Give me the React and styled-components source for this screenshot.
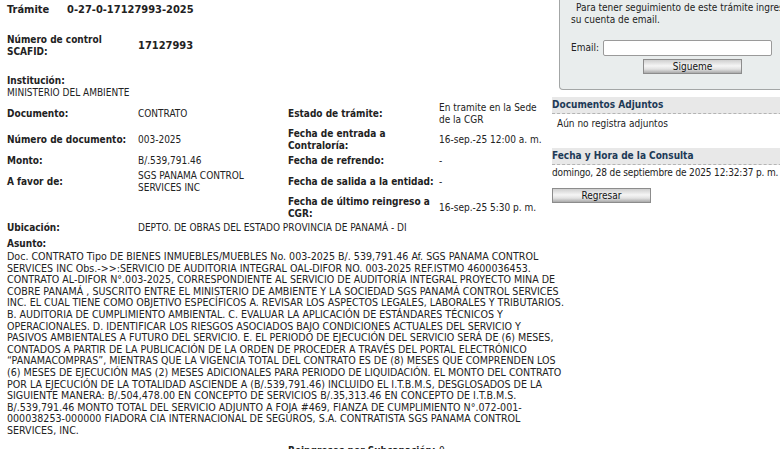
import styled, { createGlobalStyle } from 'styled-components'

const Global = createGlobalStyle`
  html, body {
    margin: 0;
    padding: 0;
    background: #fff;
    overflow: hidden;
  }
  body {
    font-family: "DejaVu Sans Condensed", "DejaVu Sans", sans-serif;
    font-size: 10px;
    line-height: 12px;
    color: #222;
  }
`

/* Estructura general */
const Page = styled.div`
  display: flex;
  width: 1000px;
`

const Main = styled.div`
  width: 538px;
  padding-left: 7px;
  flex-shrink: 0;
`

const Side = styled.div`
  width: 260px;
  margin-left: 7px;
  flex-shrink: 0;
`

/* Cabecera del trámite */
const TramiteRow = styled.div`
  display: flex;
  margin-top: 4px;
  font-weight: bold;
  font-size: 11px;
  & span:first-child {
    width: 60px;
  }
`

const ControlRow = styled.div`
  display: flex;
  align-items: center;
  margin-top: 18px;
`

const Label = styled.div`
  font-weight: bold;
  white-space: nowrap;
  width: ${(p) => p.$w || 'auto'};
`

const BigValue = styled.div`
  font-weight: bold;
  font-size: 11px;
`

const Block = styled.div`
  margin-top: ${(p) => p.$mt || 0}px;
`

/* Tabla de datos */
const Grid = styled.div`
  display: grid;
  grid-template-columns: 131px 150px 151px 1fr;
  grid-template-rows: 26px 26px 16px 26px 26px 14px;
  align-items: center;
  margin-top: 2px;
`

const Cell = styled.div`
  font-weight: ${(p) => (p.$bold ? 'bold' : 'normal')};
  grid-column: ${(p) => p.$span || 'auto'};
  white-space: nowrap;
`

const Paragraph = styled.div`
  margin-top: 1px;
  font-size: 10.6px;
  line-height: 11.6px;
  white-space: nowrap;
`

const FootRow = styled.div`
  display: grid;
  grid-template-columns: 281px 151px 1fr;
  margin-top: 8px;
`

/* Columna lateral */
const EmailBox = styled.div`
  margin-left: 7px;
  background: #e9eded;
  border: 1px solid #a3a6a6;
  border-top: none;
  border-radius: 0 0 4px 4px;
  padding: 2px 0 15px 11px;
  white-space: nowrap;
`

const Indent = styled.div`
  text-indent: 5px;
`

const EmailRow = styled.div`
  display: flex;
  align-items: center;
  margin-top: 14px;
  gap: 4px;
`

const Input = styled.input`
  width: 167px;
  height: 14px;
  padding: 0;
  border: 1px solid #9a9a9a;
  border-radius: 2px;
  background: #fff;
`

const Button = styled.button`
  display: block;
  width: ${(p) => p.$w || 99}px;
  height: 15px;
  padding: 0;
  margin-top: ${(p) => p.$mt || 0}px;
  margin-left: ${(p) => p.$ml || 0}px;
  font-family: inherit;
  font-size: 10px;
  line-height: 13px;
  color: #111;
  border: 1px solid #8c8c8c;
  background: linear-gradient(#cfcfcf, #f5f5f5 45%, #e2e2e2 70%, #a9a9a9);
`

const Header = styled.div`
  margin-top: ${(p) => p.$mt || 0}px;
  height: 16px;
  line-height: 16px;
  background: #e8e8e8;
  border-bottom: 1px dashed #b4b4b4;
  font-weight: bold;
  font-size: 10px;
  color: #1d3a57;
`

const Note = styled.div`
  margin-top: ${(p) => p.$mt || 0}px;
  padding-left: ${(p) => p.$pl || 0}px;
  letter-spacing: ${(p) => p.$ls || 0}px;
  white-space: nowrap;
`

const asunto = [
  'Doc. CONTRATO Tipo DE BIENES INMUEBLES/MUEBLES No. 003-2025 B/. 539,791.46 Af. SGS PANAMA CONTROL',
  'SERVICES INC Obs.->>:SERVICIO DE AUDITORIA INTEGRAL OAL-DIFOR NO. 003-2025 REF.ISTMO 4600036453.',
  'CONTRATO AL-DIFOR N°.003-2025, CORRESPONDIENTE AL SERVICIO DE AUDITORÍA INTEGRAL PROYECTO MINA DE',
  'COBRE PANAMÁ , SUSCRITO ENTRE EL MINISTERIO DE AMBIENTE Y LA SOCIEDAD SGS PANAMÁ CONTROL SERVICES',
  'INC. EL CUAL TIENE COMO OBJETIVO ESPECÍFICOS A. REVISAR LOS ASPECTOS LEGALES, LABORALES Y TRIBUTARIOS.',
  'B. AUDITORIA DE CUMPLIMIENTO AMBIENTAL. C. EVALUAR LA APLICACIÓN DE ESTÁNDARES TÉCNICOS Y',
  'OPERACIONALES. D. IDENTIFICAR LOS RIESGOS ASOCIADOS BAJO CONDICIONES ACTUALES DEL SERVICIO Y',
  'PASIVOS AMBIENTALES A FUTURO DEL SERVICIO. E. EL PERIODO DE EJECUCIÓN DEL SERVICIO SERÁ DE (6) MESES,',
  'CONTADOS A PARTIR DE LA PUBLICACIÓN DE LA ORDEN DE PROCEDER A TRAVÉS DEL PORTAL ELECTRÓNICO',
  '“PANAMACOMPRAS”, MIENTRAS QUE LA VIGENCIA TOTAL DEL CONTRATO ES DE (8) MESES QUE COMPRENDEN LOS',
  '(6) MESES DE EJECUCIÓN MAS (2) MESES ADICIONALES PARA PERIODO DE LIQUIDACIÓN. EL MONTO DEL CONTRATO',
  'POR LA EJECUCIÓN DE LA TOTALIDAD ASCIENDE A (B/.539,791.46) INCLUIDO EL I.T.B.M.S, DESGLOSADOS DE LA',
  'SIGUIENTE MANERA: B/.504,478.00 EN CONCEPTO DE SERVICIOS B/.35,313.46 EN CONCEPTO DE I.T.B.M.S.',
  'B/.539,791.46 MONTO TOTAL DEL SERVICIO ADJUNTO A FOJA #469, FIANZA DE CUMPLIMIENTO N°.072-001-',
  '000038253-000000 FIADORA CIA INTERNACIONAL DE SEGUROS, S.A. CONTRATISTA SGS PANAMA CONTROL',
  'SERVICES, INC.',
]

const App = () => {
  return (
    <>
      <Global />
      <Page>
        <Main>
          <TramiteRow>
            <span>Trámite</span>
            <span>0-27-0-17127993-2025</span>
          </TramiteRow>

          <ControlRow>
            <Label $w="131px">Número de control<br />SCAFID:</Label>
            <BigValue>17127993</BigValue>
          </ControlRow>

          <Block $mt={17}>
            <Label>Institución:</Label>
            <div>MINISTERIO DEL AMBIENTE</div>
          </Block>

          <Grid>
            <Cell $bold>Documento:</Cell>
            <Cell>CONTRATO</Cell>
            <Cell $bold>Estado de trámite:</Cell>
            <Cell>En tramite en la Sede<br />de la CGR</Cell>

            <Cell $bold>Número de documento:</Cell>
            <Cell>003-2025</Cell>
            <Cell $bold>Fecha de entrada a<br />Contraloría:</Cell>
            <Cell>16-sep.-25 12:00 a. m.</Cell>

            <Cell $bold>Monto:</Cell>
            <Cell>B/.539,791.46</Cell>
            <Cell $bold>Fecha de refrendo:</Cell>
            <Cell>-</Cell>

            <Cell $bold>A favor de:</Cell>
            <Cell>SGS PANAMA CONTROL<br />SERVICES INC</Cell>
            <Cell $bold>Fecha de salida a la entidad:</Cell>
            <Cell>-</Cell>

            <Cell />
            <Cell />
            <Cell $bold>Fecha de último reingreso a<br />CGR:</Cell>
            <Cell>16-sep.-25 5:30 p. m.</Cell>

            <Cell $bold>Ubicación:</Cell>
            <Cell $span="2 / 5">DEPTO. DE OBRAS DEL ESTADO PROVINCIA DE PANAMÁ - DI</Cell>
          </Grid>

          <Block $mt={3}>
            <Label>Asunto:</Label>
            <Paragraph>
              {asunto.map((line, i) => (
                <div key={i}>{line}</div>
              ))}
            </Paragraph>
          </Block>

          <FootRow>
            <span />
            <Label>Reingresos por Subcapación:</Label>
            <span>0</span>
          </FootRow>
        </Main>

        <Side>
          <EmailBox>
            <Indent>Para tener seguimiento de este trámite ingrese</Indent>
            <div>su cuenta de email.</div>
            <EmailRow>
              <span>Email:</span>
              <Input type="text" />
            </EmailRow>
            <Button $mt={3} $ml={72}>Sigueme</Button>
          </EmailBox>

          <Header $mt={7}>Documentos Adjuntos</Header>
          <Note $mt={4} $pl={5}>Aún no registra adjuntos</Note>

          <Header $mt={18}>Fecha y Hora de la Consulta</Header>
          <Note $mt={2} $ls={-0.15}>domingo, 28 de septiembre de 2025 12:32:37 p. m.</Note>
          <Button $mt={9}>Regresar</Button>
        </Side>
      </Page>
    </>
  )
}

export default App
